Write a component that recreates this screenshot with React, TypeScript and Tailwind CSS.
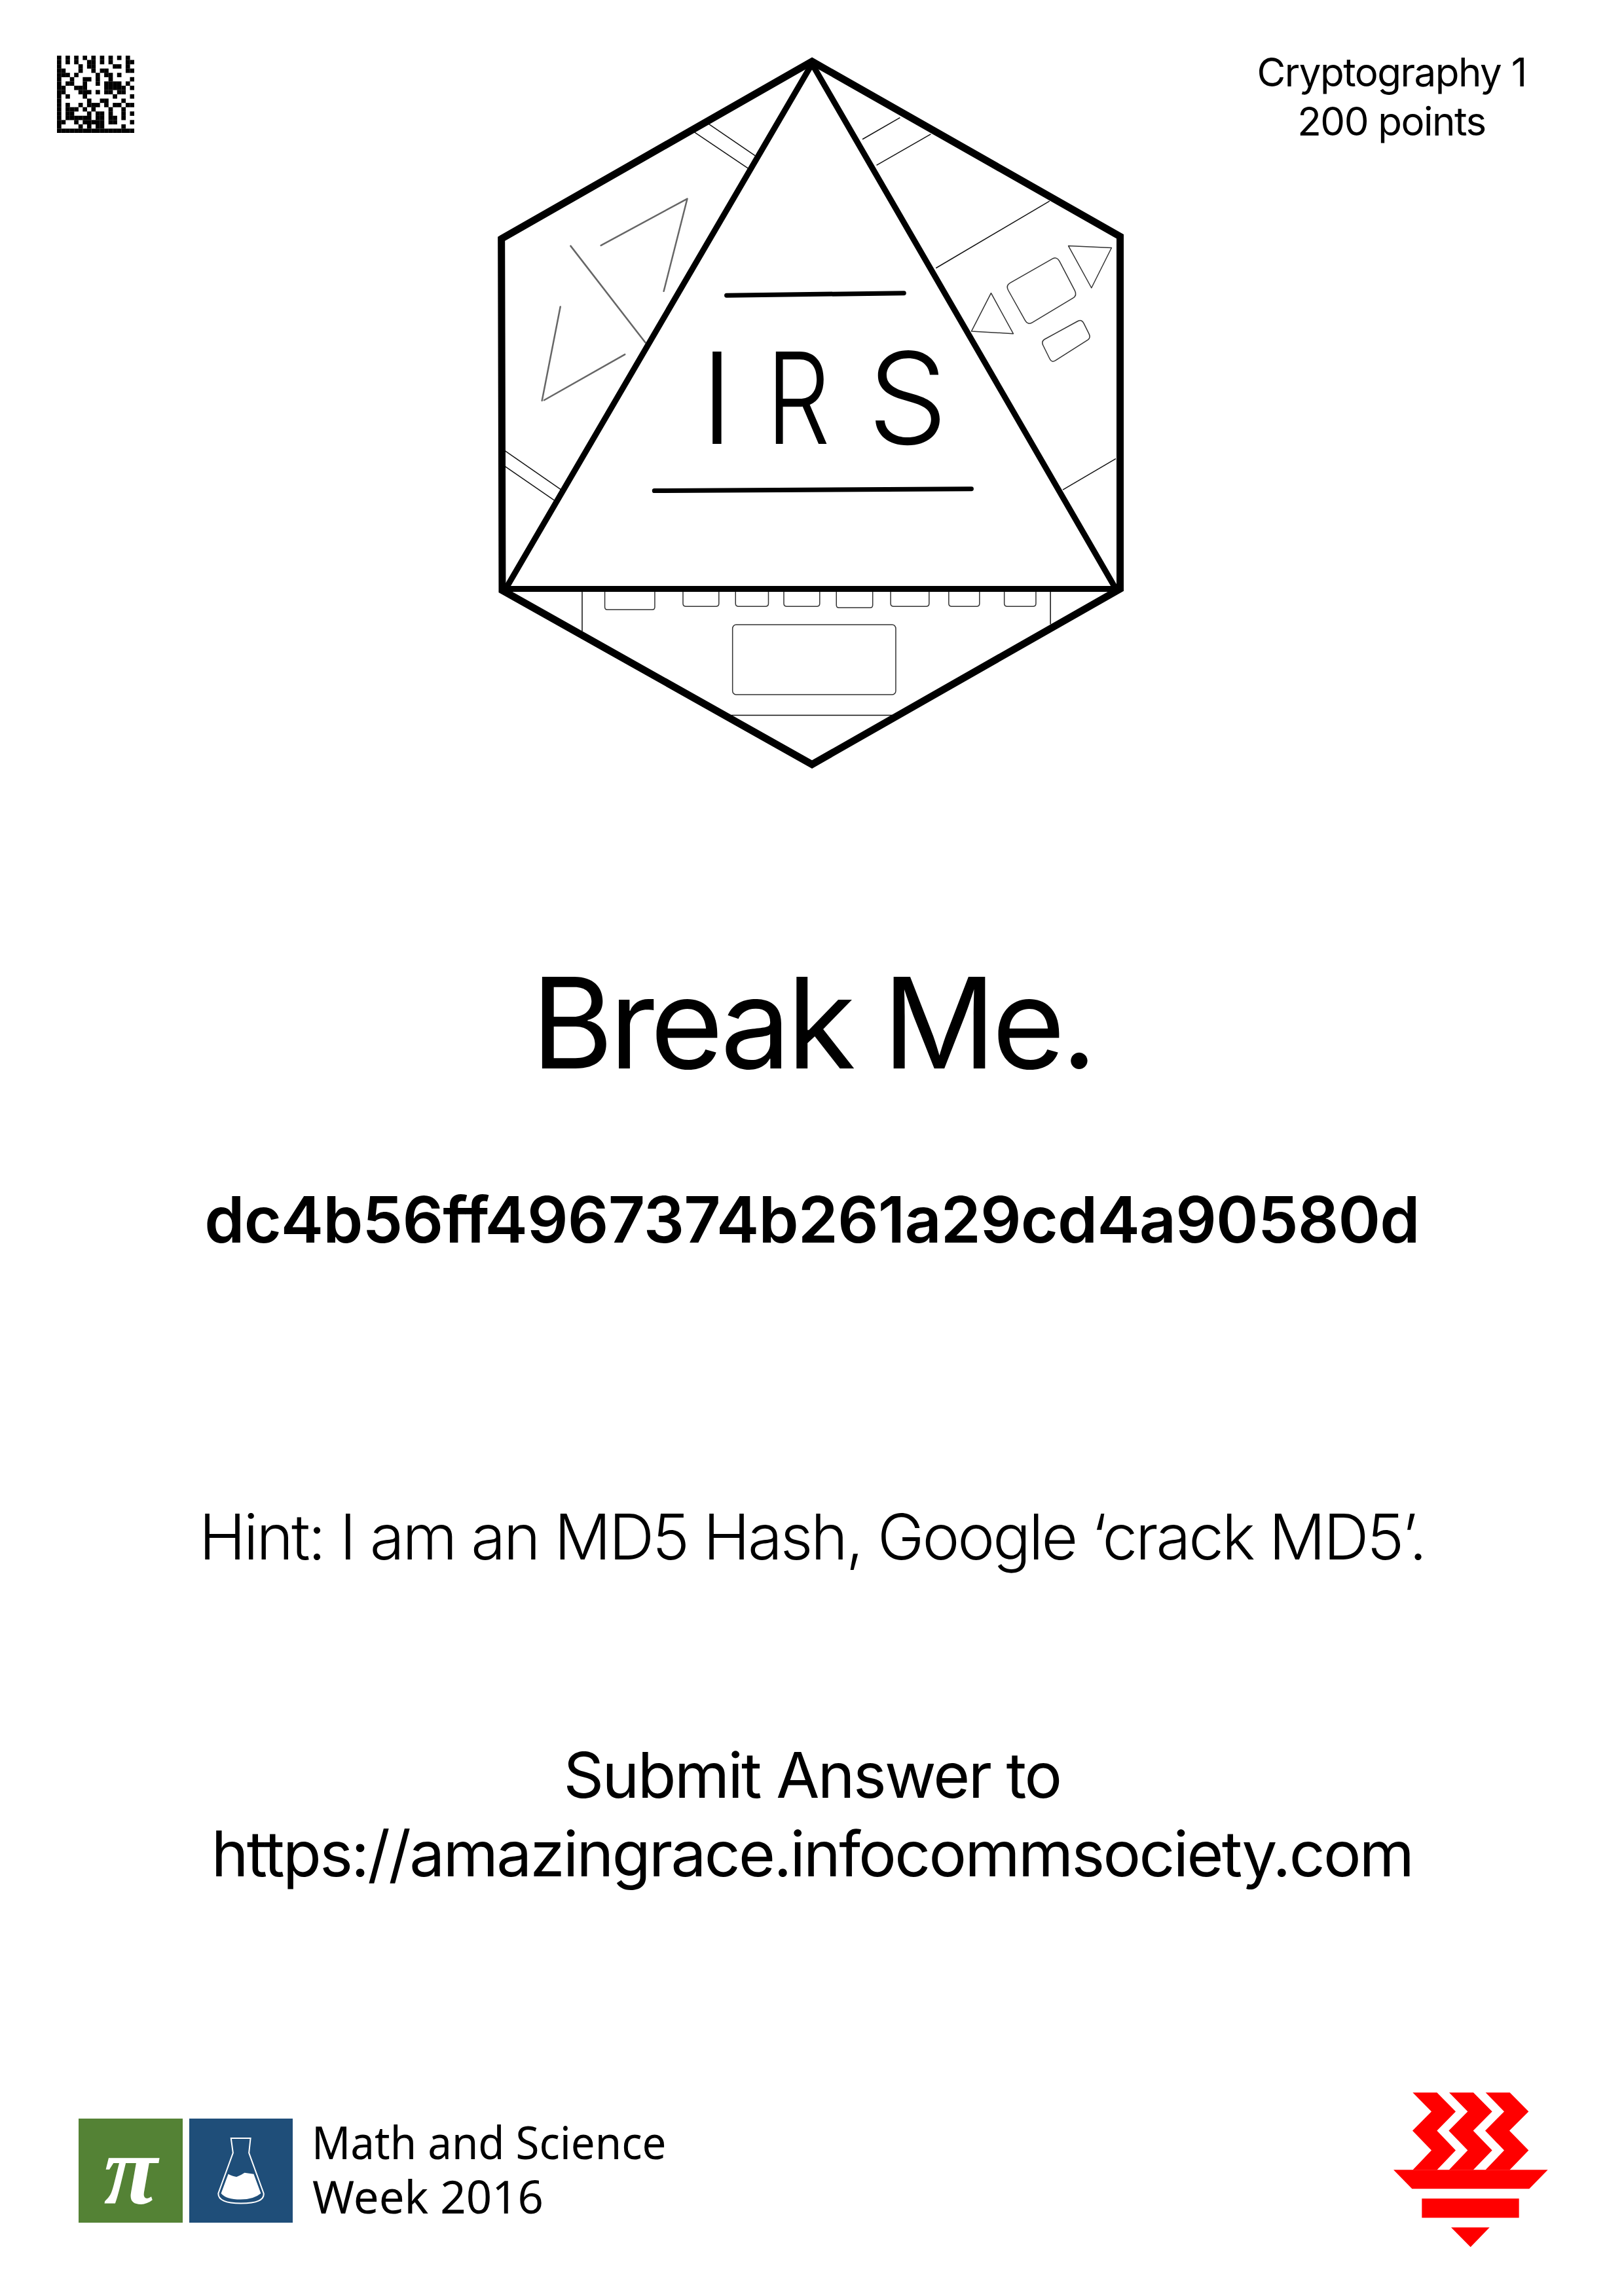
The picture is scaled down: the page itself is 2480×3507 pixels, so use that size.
const matrix = [
  "#.#.#.#.#.#.#.#.#.",
  "#.#.#..##.#.#...##",
  "#....#.##....##.#.",
  "##...#..#.##....##",
  "###.#....#.##.#...",
  "#..#..##.#..#....#",
  "#.##..#..#.####.#.",
  "##..###....#####.#",
  "##...###.#.##.##..",
  "#.#...#......#...#",
  "#......#..##...#..",
  "#.#..#.###.#.##.##",
  "#.###.#.#...#..#..",
  "#.##...#.##.#..#.#",
  "#.######.##.##.#..",
  "##..#.#####.##...#",
  "#....#.#.##....#..",
  "##################",
];

function DataMatrix() {
  return (
    <svg viewBox="0 0 18 18" className="w-[118px] h-[118px] mt-[25px] shrink-0">
      {matrix.flatMap((row, y) =>
        row.split("").map((c, x) => (c === "#" ? <rect key={`${x}-${y}`} x={x} y={y} width={1.02} height={1.02} fill="#000" /> : null))
      )}
    </svg>
  );
}

function rounded(points: number[][], r: number) {
  let d = "";
  const n = points.length;
  for (let i = 0; i < n; i++) {
    const p = points[i];
    const a = points[(i + n - 1) % n];
    const b = points[(i + 1) % n];
    const la = Math.hypot(a[0] - p[0], a[1] - p[1]);
    const lb = Math.hypot(b[0] - p[0], b[1] - p[1]);
    const s = [p[0] + ((a[0] - p[0]) * r) / la, p[1] + ((a[1] - p[1]) * r) / la];
    const e = [p[0] + ((b[0] - p[0]) * r) / lb, p[1] + ((b[1] - p[1]) * r) / lb];
    d += `${i === 0 ? "M" : "L"}${s[0]} ${s[1]} Q${p[0]} ${p[1]} ${e[0]} ${e[1]} `;
  }
  return d + "Z";
}

const thin: number[][] = [
  [520, 196, 648, 274],
  [553, 178, 664, 247],
  [78, 872, 210, 955],
  [78, 905, 195, 978],
  [915, 212, 1003, 166],
  [948, 267, 1075, 201],
  [1087, 485, 1353, 343],
  [1384, 955, 1508, 889],
  [259, 1170, 259, 1255],
  [1355, 1170, 1355, 1240],
  [608, 1433, 985, 1433],
];

const keys: number[][] = [
  [312, 429, 1209],
  [495, 579, 1202],
  [618, 695, 1202],
  [731, 815, 1202],
  [854, 939, 1205],
  [981, 1071, 1202],
  [1117, 1189, 1202],
  [1247, 1321, 1202],
];

function Emblem() {
  const ns = { vectorEffect: "non-scaling-stroke" as const };
  return (
    <svg viewBox="0 0 1020 1130" className="w-[1020px] h-[1130px] ml-[515px] mt-0 shrink-0" fill="none">
      <g transform="scale(0.6525 0.7206)">
        {thin.map((l, i) => (
          <line key={i} x1={l[0]} y1={l[1]} x2={l[2]} y2={l[3]} stroke="#111" strokeWidth={1.5} {...ns} />
        ))}
        <g stroke="#666" strokeWidth={2.5} strokeLinecap="round" strokeLinejoin="round">
          <path d="M303 437 L505 338 L450 534" {...ns} />
          <path d="M232 438 L407 643" {...ns} />
          <path d="M208 567 L165 766" {...ns} />
          <path d="M170 765 L359 668" {...ns} />
        </g>
        <g stroke="#333" strokeWidth={1.5} strokeLinejoin="round">
          <path d="M1397 438 L1498 442 L1451 527 Z" {...ns} />
          <path d="M1216 538 L1268 624 L1170 619 Z" {...ns} />
          <path d={rounded([[1250, 522], [1370, 460], [1418, 543], [1302, 606]], 12)} {...ns} />
          <path d={rounded([[1333, 640], [1428, 593], [1450, 633], [1358, 686]], 10)} {...ns} />
          <rect x={611} y={1241} width={382} height={148} rx={8} ry={8} {...ns} />
          {keys.map((k, i) => (
            <path key={i} d={`M${k[0]} 1170 V${k[2] - 6} Q${k[0]} ${k[2]} ${k[0] + 6} ${k[2]} H${k[1] - 6} Q${k[1]} ${k[2]} ${k[1]} ${k[2] - 6} V1170`} {...ns} />
          ))}
        </g>
        <path d="M797 47 L1518 418 L1518 1165 L797 1537 L72 1168 L70 423 Z" stroke="#000" strokeWidth={11} strokeLinejoin="miter" {...ns} />
        <path d="M797 52 L1508 1165 L80 1165 Z" stroke="#000" strokeWidth={9} strokeLinejoin="miter" {...ns} />
        <path d="M597 543 L1012 538" stroke="#000" strokeWidth={7} strokeLinecap="round" {...ns} />
        <path d="M428 957 L1170 953" stroke="#000" strokeWidth={7} strokeLinecap="round" {...ns} />
      </g>
      <g className="font-[Inter,sans-serif]" fill="#000" fontSize={194} fontWeight={300}>
        <text x={375} y={618} textAnchor="middle">I</text>
        <text x={450} y={618} textLength={98} lengthAdjust="spacingAndGlyphs">R</text>
        <text x={666} y={618} textAnchor="middle">S</text>
      </g>
    </svg>
  );
}

function Flask() {
  const ns = { vectorEffect: "non-scaling-stroke" as const };
  return (
    <svg viewBox="308 108 260 476" preserveAspectRatio="none" className="w-full h-full" fill="none">
      <path d="M413 198 H462 L458 265 L495 450 Q498 495 438 496 Q380 495 381 450 L418 265 L414 212 Z" stroke="#fff" strokeWidth={2} {...ns} />
      <path d="M406 362 Q420 375 428 374 Q440 365 447 356 L470 362 L488 450 Q470 478 437 478 Q400 478 388 450 Z" fill="#fff" />
    </svg>
  );
}

function MathScience() {
  return (
    <div className="flex mt-[40px] shrink-0">
      <div className="w-[159px] h-[159px] bg-[#548235] flex items-center justify-center text-white font-['Liberation_Serif',serif] italic font-bold text-[150px] leading-[159px]">
        π
      </div>
      <div className="w-[158px] h-[159px] bg-[#1f4e79] ml-[10px]">
        <Flask />
      </div>
      <div className="ml-[29px] font-['Noto_Sans',sans-serif] text-[70px] leading-[83px] text-black -mt-[6px] whitespace-nowrap">
        <div className="origin-left scale-x-[0.935]">Math and Science</div>
        <div className="origin-left scale-x-[0.985] ml-[1px]">Week 2016</div>
      </div>
    </div>
  );
}

function RedMark() {
  return (
    <svg viewBox="78 78 708 710" className="w-[236px] h-[237px] shrink-0" fill="#ff0000">
      <polygon points="166,78 277,78 363,165 277,253 363,343 277,433 166,433 252,343 165,253 252,165" />
      <polygon points="333,78 444,78 530,165 443,253 530,343 443,433 332,433 418,343 331,253 418,165" />
      <polygon points="500,78 611,78 697,165 609,253 697,343 610,433 499,433 585,343 498,253 585,165" />
      <polygon points="78,432 785,432 700,519 163,519" />
      <rect x={208} y={564} width={445} height={88} />
      <polygon points="342,696 518,696 431,786" />
    </svg>
  );
}

export default function App() {
  return (
    <div className="w-[2480px] h-[3507px] bg-white text-black font-[Inter,sans-serif] overflow-hidden">
      <header className="flex items-start pt-[60px] pl-[87px]">
        <DataMatrix />
        <Emblem />
        <div className="ml-[155px] w-[460px] text-center text-[60px] leading-[75px] mt-[13px] tracking-[-1.5px]">
          <div>Cryptography 1</div>
          <div>200 points</div>
        </div>
      </header>
      <h1 className="mt-[276px] text-center text-[192px] leading-[192px] font-normal tracking-[-6.5px]">Break Me.</h1>
      <p className="mt-[145px] text-center text-[98px] leading-[120px] font-semibold tracking-[-0.85px]">dc4b56ff4967374b261a29cd4a90580d</p>
      <p className="mt-[364px] text-center text-[96px] leading-[120px] font-light tracking-[-3px]">Hint: I am an MD5 Hash, Google ‘crack MD5’.</p>
      <div className="mt-[244px] text-center text-[96px] leading-[120px] font-normal tracking-[-2.6px]">
        <div>Submit Answer to</div>
        <div>https://amazingrace.infocommsociety.com</div>
      </div>
      <footer className="flex items-start justify-between mt-[305px] pl-[120px] pr-[116px]">
        <MathScience />
        <RedMark />
      </footer>
    </div>
  );
}
